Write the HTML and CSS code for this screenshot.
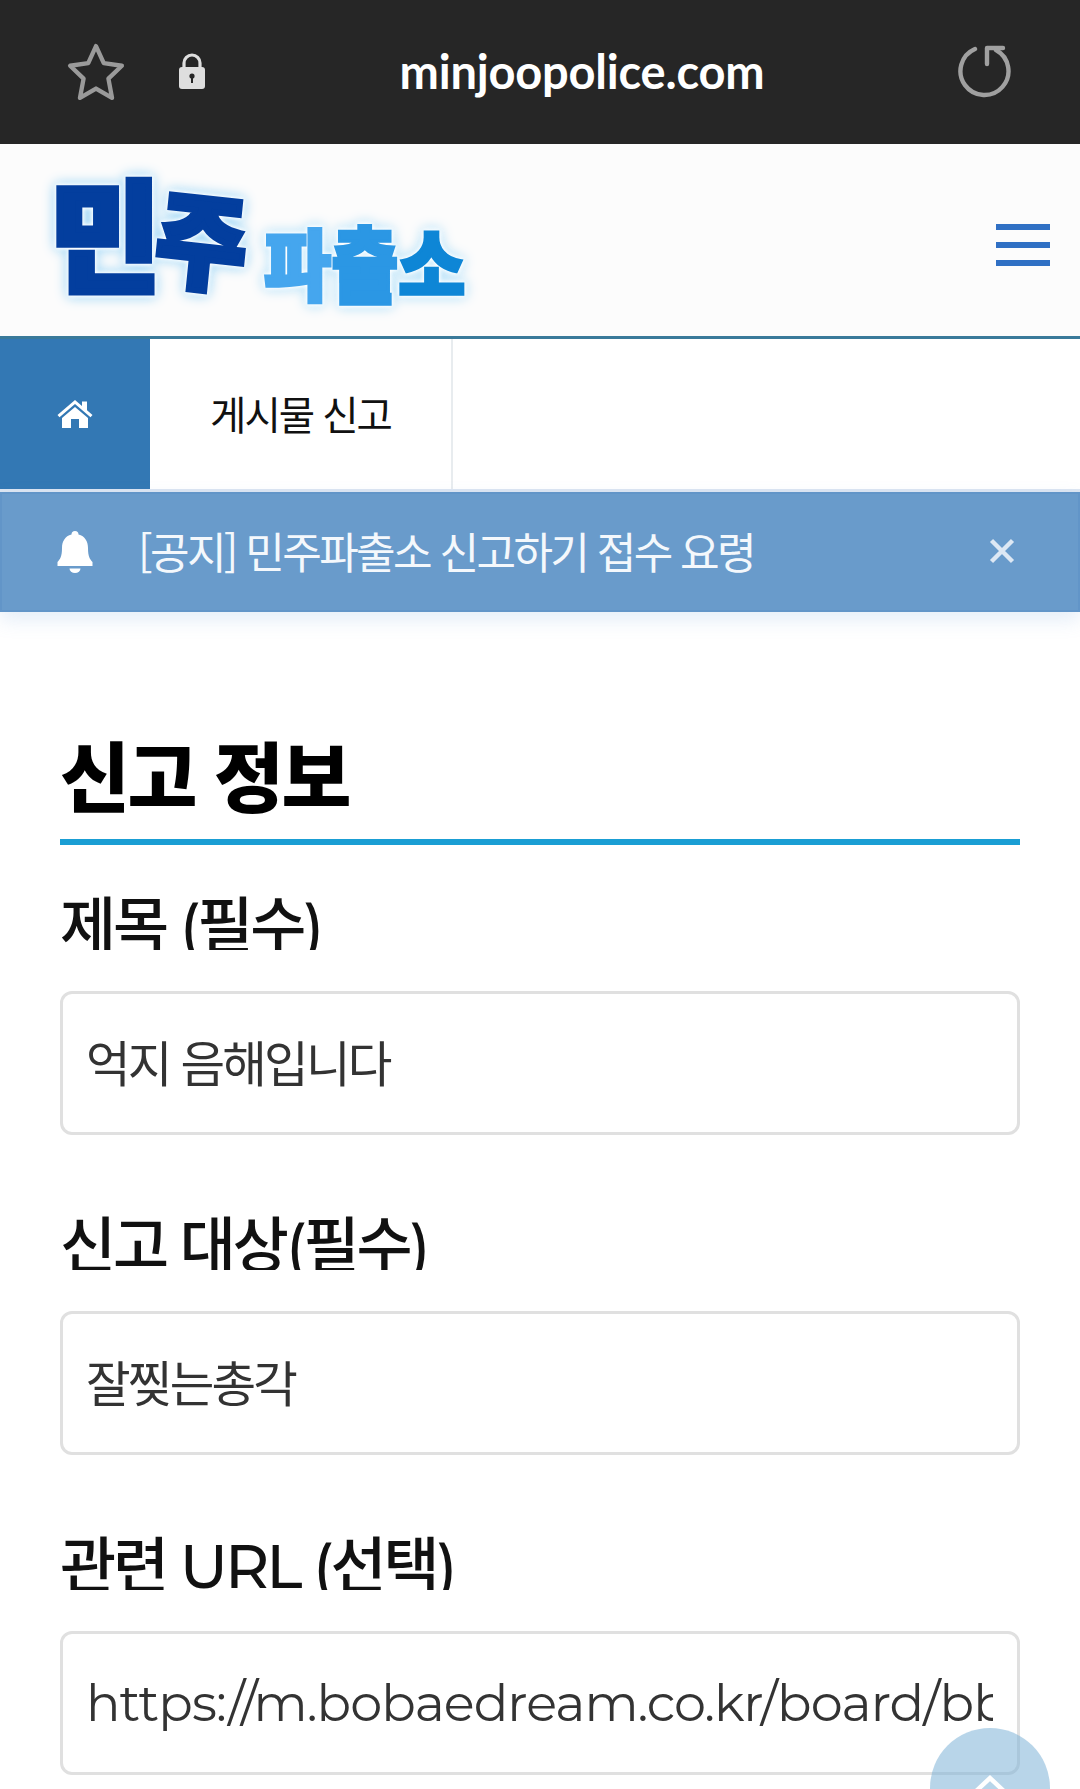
FILE: index.html
```html
<!DOCTYPE html>
<html lang="ko">
<head>
<meta charset="utf-8">
<title>민주파출소</title>
<link rel="stylesheet" href="styles.css">
</head>
<body>
<div class="browser-bar">
  <svg class="star" width="60" height="60" viewBox="0 0 58 58"><path d="M29 3 L36.500 19.500 L54 22 L41 34.500 L44.500 53 L29 44 L13.500 53 L17 34.500 L4 22 L21.500 19.500 Z" fill="none" stroke="#9a9a9a" stroke-width="4.200" stroke-linejoin="round"/></svg>
  <svg class="lock" width="28" height="38" viewBox="0 0 28 38"><path d="M6 16 V11 a8 8 0 0 1 16 0 V16" fill="none" stroke="#dedede" stroke-width="3.200"/><rect x="1" y="15" width="26" height="22" rx="3" fill="#dedede"/><circle cx="14" cy="24" r="2.600" fill="#262626"/><rect x="13" y="25" width="2" height="6" fill="#262626"/></svg>
  <div class="url">minjoopolice.com</div>
  <svg class="reload" width="56" height="56" viewBox="0 0 56 56"><path d="M19 6 A24 24 0 1 0 40 7" fill="none" stroke="#a0a0a0" stroke-width="4.400" stroke-linecap="round"/><path d="M31 21 V5 H47" fill="none" stroke="#a0a0a0" stroke-width="4.400" stroke-linejoin="round" stroke-linecap="round"/></svg>
</div>
<header class="site-header">
  <div class="logo">
    <span class="logo-big"><span class="min">민</span><span class="ju">주</span></span>
    <span class="logo-small"><span class="pa">파</span><span class="chul">출</span><span class="so">소</span></span>
  </div>
  <button class="burger" aria-label="메뉴"><i></i><i></i><i></i></button>
</header>
<nav class="crumbs">
  <div class="home"><svg width="36" height="30" viewBox="0 0 36 30"><path d="M18 1 L25 7 V2.500 H30 V11.300 L35.500 16 L33.500 18.300 L18 5 L2.500 18.300 L.5 16 Z" fill="#fff"/><path d="M18 8 L31 19 V29 H22 V20 H14 V29 H5 V19 Z" fill="#fff"/></svg></div>
  <div class="crumb">게시물 신고</div>
</nav>
<div class="notice">
  <svg class="bell" width="36" height="42" viewBox="0 0 36 42"><path d="M18 0 a3.500 3.500 0 0 1 3.500 3.500 C28 5 31 10.500 31 17 C31 26 33 28 35.500 31 V35 H.5 V31 C3 28 5 26 5 17 C5 10.500 8 5 14.500 3.500 A3.500 3.500 0 0 1 18 0 Z" fill="#fff"/><path d="M12.500 37.500 H23.500 A5.500 4.500 0 0 1 12.500 37.500 Z" fill="#fff"/></svg>
  <div class="notice-text">[공지] 민주파출소 신고하기 접수 요령</div>
  <svg class="close" width="26" height="26" viewBox="0 0 26 26"><path d="M2.500 2.500 L23.500 23.500 M23.500 2.500 L2.500 23.500" stroke="#dde8f4" stroke-width="4.400"/></svg>
</div>
<main class="form">
  <h2 class="section-title">신고 정보</h2>
  <div class="field">
    <label class="field-label">제목 (필수)</label>
    <div class="input">억지 음해입니다</div>
  </div>
  <div class="field">
    <label class="field-label">신고 대상(필수)</label>
    <div class="input">잘찢는총각</div>
  </div>
  <div class="field">
    <label class="field-label">관련 URL (선택)</label>
    <div class="input url-input"><span class="clip">https://m.bobaedream.co.kr/board/bbs_view/strange/6283746</span></div>
  </div>
</main>
<button class="to-top" aria-label="맨 위로"><svg width="44" height="24" viewBox="0 0 44 24"><path d="M4 22 L22 5 L40 22" fill="none" stroke="#fff" stroke-width="4.500"/></svg></button>
</body>
</html>
```
FILE: styles.css
```css
* { box-sizing: border-box; }
html, body { margin: 0; padding: 0; }
body {
  width: 1080px;
  height: 1789px;
  overflow: hidden;
  position: relative;
  background: #fff;
  font-family: "Montserrat", "Noto Sans CJK KR", "Noto Sans", sans-serif;
}
.browser-bar {
  height: 144px;
  background: #262626;
  position: relative;
  display: flex;
  align-items: center;
  padding-left: 66px;
}
.star { flex: none; margin-top: 1px; }
.lock { flex: none; margin-left: 52px; margin-top: -2px; }
.url {
  position: absolute;
  left: 0;
  right: 0;
  top: 44px;
  padding-left: 84px;
  text-align: center;
  font: 700 47px/55px "Lato", sans-serif;
  letter-spacing: -.2px;
  color: #fff;
}
.reload { position: absolute; right: 68px; top: 43px; }
.site-header {
  height: 195px;
  background: #fcfcfc;
  border-bottom: 3px solid #3a7a9a;
  position: relative;
}
.logo {
  position: absolute;
  left: 50px;
  top: 26px;
  width: 430px;
  height: 150px;
}
.logo-big {
  position: absolute;
  left: 0;
  top: 0;
  display: flex;
  font-family: "Noto Sans CJK KR", sans-serif;
  font-weight: 900;
  color: #033e9e;
  font-size: 120px;
  line-height: 120px;
  -webkit-text-stroke: 7px #033e9e;
  filter: drop-shadow(0 0 2px #fff) drop-shadow(0 0 2px #fff) drop-shadow(0 0 6px #8fd0f5);
}
.min { display: block; letter-spacing: -4px; }
.ju { display: block; transform: scale(.82, .86) rotate(6deg); margin-left: -9px; margin-top: 6px; }
.logo-small {
  position: absolute;
  left: 214px;
  top: 40px;
  display: flex;
  font-family: "Noto Sans CJK KR", sans-serif;
  font-weight: 900;
  font-size: 73px;
  line-height: 100px;
  filter: drop-shadow(0 0 2px #fff) drop-shadow(0 0 2px #fff) drop-shadow(0 0 6px #a8dcf8);
}
.pa { color: #45a6ee; -webkit-text-stroke: 3px #45a6ee; transform: scaleY(1.08); }
.chul { color: #2b97e4; -webkit-text-stroke: 3px #2b97e4; transform: scaleY(1.14); }
.so { color: #0e86d6; -webkit-text-stroke: 3px #0e86d6; transform: scaleY(1.08); }
.burger {
  position: absolute;
  left: 996px;
  top: 80px;
  width: 54px;
  padding: 0;
  border: 0;
  background: none;
  display: flex;
  flex-direction: column;
  gap: 12px;
}
.burger i { display: block; height: 6px; background: #3070c4; }
.crumbs {
  height: 153px;
  display: flex;
  background: #fff;
  border-bottom: 3px solid #dde6f2;
}
.home {
  width: 150px;
  height: 150px;
  background: #3378b4;
  display: flex;
  align-items: center;
  justify-content: center;
}
.crumb {
  width: 303px;
  height: 150px;
  padding-bottom: 4px;
  border-right: 2px solid #e8ecef;
  display: flex;
  align-items: center;
  justify-content: center;
  font-family: "Noto Sans CJK KR", sans-serif;
  font-size: 39.500px;
  letter-spacing: -2px;
  color: #111;
}
.notice {
  height: 120px;
  background: #699bcb;
  border: 2px solid #6295c8;
  box-shadow: 0 8px 18px rgba(105, 155, 215, .18);
  display: flex;
  align-items: center;
  padding-left: 55px;
  position: relative;
}
.bell { flex: none; }
.notice-text {
  margin-left: 45px;
  padding-bottom: 5px;
  font-family: "Noto Sans CJK KR", sans-serif;
  font-size: 43px;
  letter-spacing: -2.600px;
  color: #f4f8fc;
}
.close { position: absolute; left: 987px; top: 44px; }
.form { padding: 113px 60px 0 60px; }
.section-title {
  margin: 0;
  height: 120px;
  border-bottom: 6px solid #1a9ed4;
  font-family: "Noto Sans CJK KR", sans-serif;
  font-size: 76px;
  line-height: 96px;
  font-weight: 900;
  letter-spacing: -2.400px;
  color: #000;
}
.field { margin-top: 42px; }
.field + .field { margin-top: 72px; }
.field-label {
  display: block;
  height: 63px;
  overflow: hidden;
  font-size: 61px;
  line-height: 78px;
  font-weight: 500;
  letter-spacing: -3px;
  color: #111;
}
.input {
  margin-top: 41px;
  height: 144px;
  border: 3px solid #e0e0e0;
  border-radius: 12px;
  background: #fff;
  display: flex;
  align-items: center;
  padding: 0 24px 4px 23px;
  font-family: "Noto Sans CJK KR", sans-serif;
  font-size: 48.500px;
  letter-spacing: -2.800px;
  color: #333;
  overflow: hidden;
}
.url-input {
  font-family: "Montserrat", "Lato", sans-serif;
  font-size: 51px;
  letter-spacing: -.950px;
  white-space: nowrap;
  padding-bottom: 0;
}
.clip { display: block; overflow: hidden; width: 100%; }
.to-top {
  position: absolute;
  left: 930px;
  top: 1728px;
  width: 120px;
  height: 120px;
  padding: 45px 0 0 0;
  border: 0;
  border-radius: 50%;
  background: rgba(125, 178, 215, .55);
  display: flex;
  align-items: flex-start;
  justify-content: center;
}
```
